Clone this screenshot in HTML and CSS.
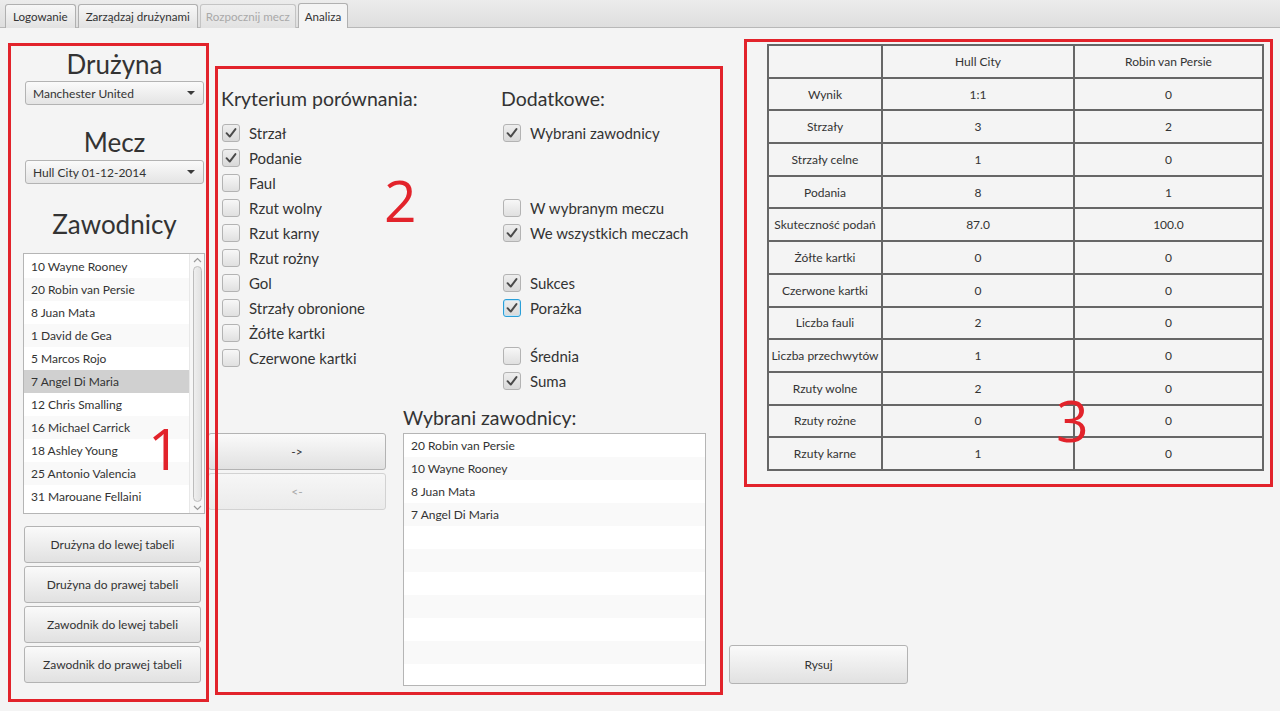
FILE: index.html
```html
<!DOCTYPE html>
<html lang="pl">
<head>
<meta charset="utf-8">
<title>Analiza</title>
<link rel="stylesheet" href="styles.css">
</head>
<body>
<div class="page">
  <div class="tabbar">
    <div class="tab">Logowanie</div>
    <div class="tab">Zarządzaj drużynami</div>
    <div class="tab disabled">Rozpocznij mecz</div>
    <div class="tab selected">Analiza</div>
  </div>

  <div class="content">
    <!-- LEFT COLUMN -->
    <div class="left">
      <div class="big-title t-druzyna">Drużyna</div>
      <div class="combo"><span>Manchester United</span><i class="arrow"></i></div>
      <div class="big-title t-mecz">Mecz</div>
      <div class="combo"><span>Hull City 01-12-2014</span><i class="arrow"></i></div>
      <div class="big-title t-zaw">Zawodnicy</div>
      <div class="listview players">
        <div class="rows">
          <div class="row">10 Wayne Rooney</div>
          <div class="row">20 Robin van Persie</div>
          <div class="row">8 Juan Mata</div>
          <div class="row">1 David de Gea</div>
          <div class="row">5 Marcos Rojo</div>
          <div class="row sel">7 Angel Di Maria</div>
          <div class="row">12 Chris Smalling</div>
          <div class="row">16 Michael Carrick</div>
          <div class="row">18 Ashley Young</div>
          <div class="row">25 Antonio Valencia</div>
          <div class="row">31 Marouane Fellaini</div>
        </div>
        <div class="vscroll">
          <svg class="sarrow" width="9" height="6" viewBox="0 0 9 6"><path d="M1 5 L4.5 1.5 L8 5" fill="none" stroke="#9a9a9a" stroke-width="1.2"/></svg>
          <div class="thumb"></div>
          <svg class="sarrow" width="9" height="6" viewBox="0 0 9 6"><path d="M1 1 L4.5 4.5 L8 1" fill="none" stroke="#9a9a9a" stroke-width="1.2"/></svg>
        </div>
      </div>
      <div class="btn-stack">
        <div class="btn">Drużyna do lewej tabeli</div>
        <div class="btn">Drużyna do prawej tabeli</div>
        <div class="btn">Zawodnik do lewej tabeli</div>
        <div class="btn">Zawodnik do prawej tabeli</div>
      </div>
    </div>

    <!-- MIDDLE COLUMN -->
    <div class="middle">
      <div class="mid-top">
        <div class="crit">
          <div class="mid-title">Kryterium porównania:</div>
          <div class="cbrow"><span class="cb on"><svg viewBox="0 0 18 18"><path d="M4 9.2 L7.6 13 L14 4.6"/></svg></span>Strzał</div>
          <div class="cbrow"><span class="cb on"><svg viewBox="0 0 18 18"><path d="M4 9.2 L7.6 13 L14 4.6"/></svg></span>Podanie</div>
          <div class="cbrow"><span class="cb"></span>Faul</div>
          <div class="cbrow"><span class="cb"></span>Rzut wolny</div>
          <div class="cbrow"><span class="cb"></span>Rzut karny</div>
          <div class="cbrow"><span class="cb"></span>Rzut rożny</div>
          <div class="cbrow"><span class="cb"></span>Gol</div>
          <div class="cbrow"><span class="cb"></span>Strzały obronione</div>
          <div class="cbrow"><span class="cb"></span>Żółte kartki</div>
          <div class="cbrow"><span class="cb"></span>Czerwone kartki</div>
        </div>
        <div class="extra">
          <div class="mid-title">Dodatkowe:</div>
          <div class="cbrow"><span class="cb on"><svg viewBox="0 0 18 18"><path d="M4 9.2 L7.6 13 L14 4.6"/></svg></span>Wybrani zawodnicy</div>
          <div class="cbrow gap50"><span class="cb"></span>W wybranym meczu</div>
          <div class="cbrow"><span class="cb on"><svg viewBox="0 0 18 18"><path d="M4 9.2 L7.6 13 L14 4.6"/></svg></span>We wszystkich meczach</div>
          <div class="cbrow gap25"><span class="cb on"><svg viewBox="0 0 18 18"><path d="M4 9.2 L7.6 13 L14 4.6"/></svg></span>Sukces</div>
          <div class="cbrow"><span class="cb on focus"><svg viewBox="0 0 18 18"><path d="M4 9.2 L7.6 13 L14 4.6"/></svg></span>Porażka</div>
          <div class="cbrow gap23"><span class="cb"></span>Średnia</div>
          <div class="cbrow"><span class="cb on"><svg viewBox="0 0 18 18"><path d="M4 9.2 L7.6 13 L14 4.6"/></svg></span>Suma</div>
        </div>
      </div>
      <div class="mid-bottom">
        <div class="move-btns">
          <div class="btn mv">-&gt;</div>
          <div class="btn mv disabled">&lt;-</div>
        </div>
        <div class="chosen">
          <div class="mid-title">Wybrani zawodnicy:</div>
          <div class="listview chosen-list">
            <div class="rows">
              <div class="row">20 Robin van Persie</div>
              <div class="row">10 Wayne Rooney</div>
              <div class="row">8 Juan Mata</div>
              <div class="row">7 Angel Di Maria</div>
              <div class="row"></div>
              <div class="row"></div>
              <div class="row"></div>
              <div class="row"></div>
              <div class="row"></div>
              <div class="row"></div>
              <div class="row"></div>
            </div>
          </div>
        </div>
      </div>
    </div>

    <!-- RIGHT COLUMN -->
    <div class="right">
      <table class="stats">
        <tr><td></td><td>Hull City</td><td>Robin van Persie</td></tr>
        <tr><td>Wynik</td><td>1:1</td><td>0</td></tr>
        <tr><td>Strzały</td><td>3</td><td>2</td></tr>
        <tr><td>Strzały celne</td><td>1</td><td>0</td></tr>
        <tr><td>Podania</td><td>8</td><td>1</td></tr>
        <tr><td>Skuteczność podań</td><td>87.0</td><td>100.0</td></tr>
        <tr><td>Żółte kartki</td><td>0</td><td>0</td></tr>
        <tr><td>Czerwone kartki</td><td>0</td><td>0</td></tr>
        <tr><td>Liczba fauli</td><td>2</td><td>0</td></tr>
        <tr><td>Liczba przechwytów</td><td>1</td><td>0</td></tr>
        <tr><td>Rzuty wolne</td><td>2</td><td>0</td></tr>
        <tr><td>Rzuty rożne</td><td>0</td><td>0</td></tr>
        <tr><td>Rzuty karne</td><td>1</td><td>0</td></tr>
      </table>
      <div class="btn rysuj">Rysuj</div>
    </div>
  </div>

  <!-- annotation overlays -->
  <div class="mark mark1"></div>
  <div class="mark mark2"></div>
  <div class="mark mark3"></div>
  <div class="digit d1">1</div>
  <div class="digit d2">2</div>
  <div class="digit d3">3</div>
</div>
</body>
</html>
```

FILE: styles.css
```css
* { box-sizing: border-box; }
html, body { margin: 0; padding: 0; }
body {
  background: #f4f4f4;
  font-family: "Lato", "Open Sans", sans-serif;
  font-size: 12px;
  color: #333;
}
.page {
  position: relative;
  width: 1280px;
  height: 711px;
  overflow: hidden;
  background: #f4f4f4;
}

/* ---------- tabs ---------- */
.tabbar {
  height: 28px;
  display: flex;
  align-items: flex-end;
  gap: 2px;
  padding-left: 5px;
  background: linear-gradient(#ececec, #dedede);
  border-bottom: 1px solid #b8b8b8;
}
.tab {
  height: 24px;
  padding: 0 7px;
  display: flex;
  align-items: center;
  border: 1px solid #b0b0b0;
  border-bottom: none;
  border-radius: 3px 3px 0 0;
  background: linear-gradient(#f7f7f7, #e2e2e2);
  color: #333;
  font-size: 11.6px;
  margin-bottom: -1px;
}
.tab.disabled { padding: 0 5px; color: #a9a9a9; background: linear-gradient(#eeeeee, #e2e2e2); border-color: #c4c4c4; }
.tab.selected { padding: 0 6px; background: #f4f4f4; height: 25px; }

/* ---------- layout ---------- */
.content {
  display: flex;
  height: 683px;
  padding-left: 22px;
}
.left {
  width: 183px;
  display: flex;
  flex-direction: column;
}
.middle {
  width: 496px;
  margin-left: 3px;
  display: flex;
  flex-direction: column;
}
.right {
  width: 535px;
  margin-left: 25px;
  display: flex;
  flex-direction: column;
  justify-content: space-between;
  padding-top: 16px;
  padding-bottom: 27px;
}

/* ---------- left column ---------- */
.big-title {
  font-size: 26px;
  line-height: 30px;
  text-align: center;
  color: #333;
  padding-left: 2px;
}
.t-druzyna { margin-top: 21px; }
.t-mecz { margin-top: 22px; }
.t-zaw { margin-top: 25px; }
.combo {
  margin: 2px 0 0 3px;
  width: 179px;
  height: 24px;
  border: 1px solid #b3b3b3;
  border-radius: 3px;
  background: linear-gradient(#fafafa, #e4e4e4);
  display: flex;
  align-items: center;
  justify-content: space-between;
  padding: 0 7px 0 7px;
  color: #333;
}
.t-mecz + .combo { margin-top: 3px; }
.arrow {
  width: 0; height: 0;
  border-left: 4px solid transparent;
  border-right: 4px solid transparent;
  border-top: 4px solid #3a3a3a;
  margin-right: 1px;
}

.listview {
  border: 1px solid #b5b5b5;
  background: #fff;
  display: flex;
  overflow: hidden;
}
.rows { flex: 1; }
.row {
  height: 23px;
  line-height: 24px;
  padding-left: 7px;
  color: #333;
  white-space: nowrap;
}
.row:nth-child(even) { background: #f9f9f9; }
.row.sel { background: #d0d0d0; }

.players {
  margin-top: 14px;
  margin-left: 1px;
  width: 182px;
  height: 261px;
}
.players .rows { padding-top: 1px; }
.vscroll {
  width: 15px;
  background: #f7f7f7;
  border-left: 1px solid #e8e8e8;
  display: flex;
  flex-direction: column;
  align-items: center;
  padding: 3px 0 2px;
}
.sarrow { flex: none; }
.thumb {
  flex: 1;
  width: 9px;
  margin: 3px 0 3px 1px;
  border: 1px solid #bdbdbd;
  border-radius: 5px;
  background: linear-gradient(90deg, #efefef, #e2e2e2);
}

.btn-stack {
  margin-top: 12px;
  margin-left: 2px;
  display: flex;
  flex-direction: column;
  gap: 3px;
}
.btn {
  height: 36px;
  width: 177px;
  border: 1px solid #b3b3b3;
  border-radius: 3px;
  background: linear-gradient(#fafafa, #e1e1e1);
  display: flex;
  align-items: center;
  justify-content: center;
  color: #333;
}
.btn-stack .btn { height: 37px; }

/* ---------- middle column ---------- */
.mid-top {
  display: flex;
  padding-top: 59px;
  padding-left: 14px;
}
.crit { width: 280px; }
.mid-title {
  font-size: 19.5px;
  line-height: 24px;
  color: #333;
  margin-bottom: 9px;
  margin-left: -1px;
}
.extra .mid-title { margin-left: -1px; }
.cbrow {
  height: 25px;
  display: flex;
  align-items: center;
  gap: 9px;
  font-size: 15px;
  color: #333;
  padding-left: 0;
}
.extra .cbrow { padding-left: 1px; }
.gap50 { margin-top: 50px; }
.gap25 { margin-top: 25px; }
.gap23 { margin-top: 23px; }
.cb {
  width: 18px;
  height: 18px;
  flex: none;
  border: 1px solid #b3b3b3;
  border-radius: 3px;
  background: linear-gradient(#f7f7f7, #e0e0e0);
  display: flex;
}
.cb.on { background: linear-gradient(#eeeeee, #d9d9d9); }
.cb svg { width: 16px; height: 16px; }
.cb svg path { fill: none; stroke: #4a4a4a; stroke-width: 2.2; stroke-linecap: round; stroke-linejoin: round; }
.cb.focus { border-color: #2a9fd8; box-shadow: inset 0 0 0 1px #bfe3f6; }

.mid-bottom {
  display: flex;
  margin-top: 13px;
}
.move-btns {
  padding-top: 27px;
  display: flex;
  flex-direction: column;
  gap: 3px;
}
.btn.mv { width: 178px; height: 37px; }
.btn.mv.disabled { color: #a8a8a8; border-color: #d2d2d2; background: linear-gradient(#f6f6f6, #ebebeb); }
.chosen { margin-left: 17px; }
.chosen .mid-title { margin-bottom: 3px; margin-left: 0; }
.chosen-list { width: 303px; height: 253px; }

/* ---------- right column ---------- */
.stats {
  margin-left: 38px;
  border-collapse: collapse;
  width: 497px;
  table-layout: fixed;
  border: 2px solid #666;
}
.stats td {
  border: 2px solid #666;
  height: 32.7px;
  padding: 0;
  text-align: center;
  vertical-align: middle;
  font-size: 12px;
  color: #333;
  white-space: nowrap;
}
.stats td:nth-child(1) { width: 114px; }
.stats td:nth-child(2) { width: 192px; }
.btn.rysuj { width: 179px; height: 39px; }

/* ---------- annotation overlays ---------- */
.mark {
  position: absolute;
  border: 3px solid #e2232b;
}
.mark1 { left: 8px; top: 43px; width: 201px; height: 659px; }
.mark2 { left: 215px; top: 66px; width: 508px; height: 629px; }
.mark3 { left: 744px; top: 39px; width: 529px; height: 448px; }
.digit {
  position: absolute;
  font-family: "Open Sans", sans-serif;
  font-size: 57px;
  line-height: 57px;
  color: #e2232b;
}
.d1 { left: 148px; top: 420px; }
.d2 { left: 384px; top: 172px; }
.d3 { left: 1056px; top: 392px; }
```
